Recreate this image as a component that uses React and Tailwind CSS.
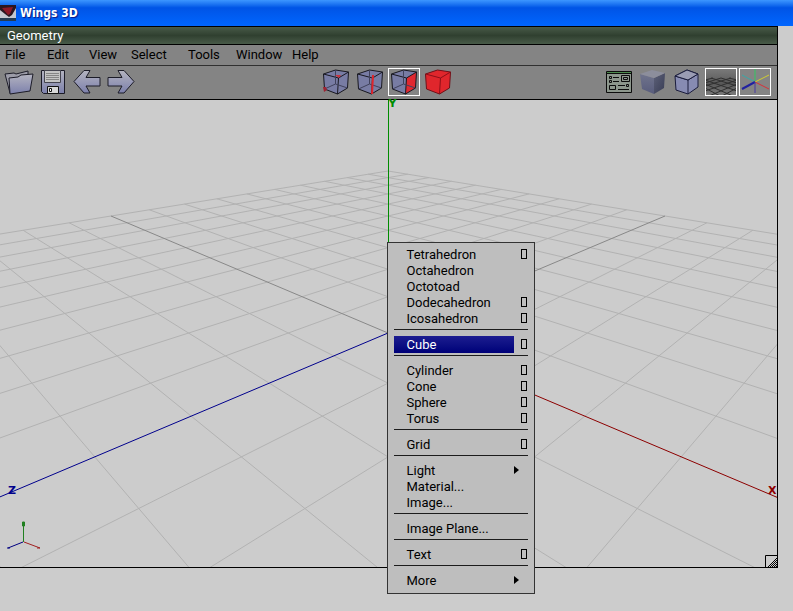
import { Fragment } from "react";

// --- DATA ---
const menuBar = [
  { label: "File", width: "w-[42px]" },
  { label: "Edit", width: "w-[42px]" },
  { label: "View", width: "w-[42px]" },
  { label: "Select", width: "w-[57px]" },
  { label: "Tools", width: "w-[48px]" },
  { label: "Window", width: "w-[56px]" },
  { label: "Help", width: "w-[40px]" },
];

const popupGroups = [
  [
    { label: "Tetrahedron", option: true },
    { label: "Octahedron" },
    { label: "Octotoad" },
    { label: "Dodecahedron", option: true },
    { label: "Icosahedron", option: true },
  ],
  [{ label: "Cube", option: true, active: true }],
  [
    { label: "Cylinder", option: true },
    { label: "Cone", option: true },
    { label: "Sphere", option: true },
    { label: "Torus", option: true },
  ],
  [{ label: "Grid", option: true }],
  [{ label: "Light", submenu: true }, { label: "Material..." }, { label: "Image..." }],
  [{ label: "Image Plane..." }],
  [{ label: "Text", option: true }],
  [{ label: "More", submenu: true }],
];

// --- GROUND PLANE ---
const GRID = 10;

// perspective projection of the point (x, z) on the ground
const project = (x, z) => {
  const d = 1 - 0.08 * (x + z);
  return [388 + (49.86 * (x - z)) / d, 263.25 / d - 30.25];
};

const segment = (x1, z1, x2, z2) => {
  const [ax, ay] = project(x1, z1);
  const [bx, by] = project(x2, z2);
  return `M${ax.toFixed(1)} ${ay.toFixed(1)}L${bx.toFixed(1)} ${by.toFixed(1)}`;
};

const gridPath = [];
for (let i = -GRID; i <= GRID; i++) {
  if (i === 0) continue;
  // stop in front of the camera
  const end = Math.min(GRID, 12 - i);
  gridPath.push(segment(i, -GRID, i, end), segment(-GRID, i, end, i));
}

// --- ICONS ---
const Gradients = () => (
  <svg className="absolute size-0" aria-hidden="true">
    <defs>
      <linearGradient id="steel" x1="0" y1="0" x2="0" y2="1">
        <stop offset="0" stopColor="#b4b4c0" />
        <stop offset="1" stopColor="#7c80ac" />
      </linearGradient>
      <linearGradient id="shadeLeft" x1="0" y1="0" x2="0" y2="1">
        <stop offset="0" stopColor="#70748c" />
        <stop offset="1" stopColor="#585c7c" />
      </linearGradient>
      <linearGradient id="shadeRight" x1="0" y1="0" x2="1" y2="1">
        <stop offset="0" stopColor="#5c6078" />
        <stop offset="1" stopColor="#383c54" />
      </linearGradient>
      <linearGradient id="haze" x1="0" y1="0" x2="0" y2="1">
        <stop offset="0" stopColor="#808080" />
        <stop offset="0.35" stopColor="#686868" />
        <stop offset="0.55" stopColor="#585858" />
        <stop offset="1" stopColor="#848484" />
      </linearGradient>
    </defs>
  </svg>
);

const Icon = ({ children }) => (
  <svg className="block size-8" viewBox="0 0 32 32" fill="none" aria-hidden="true">
    {children}
  </svg>
);

const IconOpen = () => (
  <Icon>
    <path d="M2 8l9-1 2 1 12-3v6L7 27z" fill="#9c9ca8" stroke="#1c1c28" strokeLinejoin="round" />
    <path
      d="M6 12l9-1 3-2 12-1-3 17-20 3z"
      fill="url(#steel)"
      stroke="#1c1c28"
      strokeLinejoin="round"
    />
  </Icon>
);
const IconSave = () => (
  <Icon>
    <path d="M4.500 4.500h23v23h-21l-2-2z" fill="url(#steel)" stroke="#1c1c28" />
    <path d="M7.500 4.500h16v12h-16z" fill="#c4c4c4" stroke="#44444f" />
    <path d="M9 7.500h13M9 9.500h13M9 11.500h13M9 13.500h13" stroke="#858585" />
    <path d="M10.500 20.500h11v7h-11z" fill="#d8d8d8" stroke="#111111" />
    <path d="M12.500 22.500h2v3h-2z" fill="#ffffff" stroke="#111111" />
  </Icon>
);
const IconUndo = () => (
  <Icon>
    <path
      d="M3 15.500L13 4.500h6l-4 7h14V20H15l4 7h-6z"
      fill="url(#steel)"
      stroke="#1c1c28"
      strokeLinejoin="round"
    />
  </Icon>
);
const IconRedo = () => (
  <Icon>
    <path
      d="M29 15.500L19 4.500h-6l4 7H3V20h14l-4 7h6z"
      fill="url(#steel)"
      stroke="#1c1c28"
      strokeLinejoin="round"
    />
  </Icon>
);

const CubeLines = () => (
  <>
    <path
      d="M3.500 8l12-4 13 2-1 16-10 6-13-5zM3.500 8l15 4 10-6M18.500 12l-1 16"
      stroke="#181820"
      strokeLinejoin="round"
    />
    <path d="M15.500 4v14l-11 5M15.500 18l12 4" stroke="#40425c" />
  </>
);
const CubeBody = () => <path d="M3.500 8l12-4 13 2-1 16-10 6-13-5z" fill="#787ca4" />;

const IconVertex = () => (
  <Icon>
    <CubeBody />
    <CubeLines />
    <path d="M15 9h6l-2 3z" fill="#c83440" />
    <path d="M3 21h3l1 3-3 2z" fill="#9c2434" />
  </Icon>
);
const IconEdge = () => (
  <Icon>
    <CubeBody />
    <CubeLines />
    <path d="M19 9l-1 19" stroke="#e0242c" strokeWidth="2" />
  </Icon>
);
const IconFace = () => (
  <Icon>
    <CubeBody />
    <path d="M18.500 12l10-6-1 16-10 6z" fill="#e02830" />
    <CubeLines />
  </Icon>
);
const IconBody = () => (
  <Icon>
    <path
      d="M3.500 8l12-4 13 2-1 16-10 6-13-5z"
      fill="#e0262c"
      stroke="#701018"
      strokeLinejoin="round"
    />
    <path d="M3.500 8l15 4 10-6M18.500 12l-1 16" stroke="#8c1018" />
  </Icon>
);

const IconPanel = () => (
  <Icon>
    <path d="M3.500 5.500h25v21h-25z" fill="#8c968c" stroke="#0c0c0c" />
    <path d="M4 6.500h24" stroke="#4c8a4c" />
    <path
      d="M4 7.500h24M6.500 10.500h2v2h-2zM6.500 14.500h2v2h-2zM10 11.500h6M10 15.500h6M18.500 9.500h8v6h-8zM20.500 11.500h4v2h-4zM6.500 19.500h6v4h-6zM15 19.500h7M23.500 18.500h2v2h-2zM15 23.500h11"
      stroke="#0c0c0c"
    />
  </Icon>
);
const IconSmooth = () => (
  <Icon>
    <path d="M3 8l14 4v16L5 23z" fill="url(#shadeLeft)" />
    <path d="M17 12l11-5-1 15-10 6z" fill="url(#shadeRight)" />
    <path d="M3 8l12-4 13 3-11 5z" fill="#8c8e9c" />
  </Icon>
);
const IconFlat = () => (
  <Icon>
    <path
      d="M4 10l12-6 11 4v13l-10 7-12-4zM4 10l13 4 10-6M17 14v14"
      fill="#878bb2"
      stroke="#1a1c3c"
      strokeLinejoin="round"
    />
    <path d="M4 10l12-6 11 4-10 6z" fill="#9a9cb4" stroke="#1a1c3c" strokeLinejoin="round" />
  </Icon>
);
const IconGround = () => (
  <Icon>
    <path d="M0 0h32v32H0z" fill="url(#haze)" />
    <path
      d="M0 14l8-2M0 17l16-5M0 20l26-8M0 25l32-11M4 30l28-12M15 31l17-9M32 14l-8-2M32 17l-16-5M32 20L6 12M32 25L0 14M28 30L0 18M17 31L0 22"
      stroke="#303030"
    />
  </Icon>
);
const IconAxes = () => (
  <Icon>
    <path d="M16 16V3" stroke="#30c860" />
    <path d="M16 16L3 9" stroke="#38a8a8" />
    <path d="M16 16l14-7" stroke="#d0cc30" />
    <path d="M16 16L3 23" stroke="#2020a0" strokeWidth="2" />
    <path d="M16 16l14 7" stroke="#d83038" />
    <path d="M16 16v11" stroke="#4838a0" />
  </Icon>
);

const ToolButton = ({ label, icon: IconComponent, pressed }) => (
  <button
    type="button"
    aria-label={label}
    aria-pressed={pressed}
    className={`flex h-7 w-8 items-center justify-center overflow-hidden border ${
      pressed ? "border-white" : "border-transparent"
    }`}
  >
    <span className="shrink-0">
      <IconComponent />
    </span>
  </button>
);

// --- PARTS ---
const TitleBar = () => (
  <header className="flex h-[26px] items-center gap-1 bg-linear-to-b from-[#3c96ff] via-[#0054e6] via-30% to-[#0066ff]">
    <svg className="h-4 w-4 shrink-0" viewBox="0 0 16 16" aria-hidden="true">
      <path d="M0 0h16v16H0z" fill="#c4c8d0" />
      <path d="M0 0h16v3l-4 7-3 2-4-3-5-4z" fill="#2a1620" />
      <path d="M2 3l11-1-3 7-2 1z" fill="#8c1828" />
      <path d="M0 13h16v3H0z" fill="#243c54" />
    </svg>
    <h1 className="font-['DejaVu_Sans_Condensed','DejaVu_Sans',sans-serif] text-[12px] font-bold text-white [text-shadow:1px_1px_1px_#0a1883]">
      Wings 3D
    </h1>
  </header>
);

const Scene = () => (
  <svg
    className="block h-full w-full"
    viewBox="0 0 777 467"
    preserveAspectRatio="xMidYMid slice"
    role="img"
    aria-label="Perspective view"
  >
    <path d={gridPath.join("")} fill="none" stroke="#b2b2b2" />
    <path d={segment(-GRID, 0, 0, 0) + segment(0, -GRID, 0, 0)} stroke="#888888" />
    <path d="M388.500 0V233" stroke="#008c00" />
    <path d={segment(0, 0, 9, 0)} stroke="#8c0000" />
    <path d={segment(0, 0, 0, 9)} stroke="#00008c" />
    <g className="font-['DejaVu_Sans',sans-serif] text-[11px] font-bold">
      <text x="768" y="394" fill="#8c0000">X</text>
      <text x="8" y="394" fill="#00008c">Z</text>
    </g>
    <path d="M23.500 442v-20M22.500 422v4h2v-4z" stroke="#208020" />
    <path d="M24 442l16 6M37 448h3" stroke="#a02020" />
    <path d="M23 442l-15 6M7 448h3" stroke="#000080" />
  </svg>
);

const PopupItem = ({ item }) => (
  <li className="flex h-4 items-center justify-between">
    <button
      type="button"
      className={`flex w-[120px] items-center pt-0.5 pl-[13px] text-left ${
        item.active ? "h-[17px] bg-linear-to-b from-[#1c1c90] to-[#000078] text-white" : "h-4"
      }`}
    >
      {item.label}
    </button>
    {item.option && (
      <button
        type="button"
        aria-label={`${item.label} options`}
        className="mr-px h-[10px] w-[6px] border border-black"
      />
    )}
    {item.submenu && (
      <svg className="mr-[9px] h-2 w-[5px]" viewBox="0 0 5 8" aria-hidden="true">
        <path d="M0 0l5 4-5 4z" />
      </svg>
    )}
  </li>
);

const Popup = () => (
  <ul className="absolute top-[142px] left-[calc(50%-2px)] w-[148px] border border-[#333333] bg-[#bebebe] px-[6px] pt-[3px] pb-[5px]">
    {popupGroups.map((group, index) => (
      <Fragment key={group[0].label}>
        {index > 0 && (
          <li className="h-[10px] pt-[3px]">
            <hr className="border-t border-[#1c1c1c]" />
          </li>
        )}
        {group.map((item) => (
          <PopupItem key={item.label} item={item} />
        ))}
      </Fragment>
    ))}
  </ul>
);

export default function App() {
  return (
    <div className="flex min-h-screen flex-col bg-[#cccccc] font-['Roboto',sans-serif] text-[13px] leading-4 text-black">
      <Gradients />
      <TitleBar />
      <main className="mr-[15px] mb-[43px] flex flex-1 flex-col border-r border-black">
        <h2 className="h-[19px] border-y border-black bg-linear-to-b from-[#485a48] via-[#304030] to-[#485a48] pt-px pl-[7px] text-white">
          Geometry
        </h2>
        <nav className="flex h-[21px] items-center border-b border-[#303030] bg-[#848484] pl-[5px]">
          {menuBar.map((item) => (
            <button key={item.label} type="button" className={`${item.width} text-left`}>
              {item.label}
            </button>
          ))}
        </nav>
        <div className="grid h-[34px] grid-cols-[1fr_auto_1fr] items-start border-b border-black bg-[#848484] pt-[2px] pr-[6px] pl-[3px]">
          <div className="flex gap-0.5">
            <ToolButton label="Open" icon={IconOpen} />
            <ToolButton label="Save" icon={IconSave} />
            <ToolButton label="Undo" icon={IconUndo} />
            <ToolButton label="Redo" icon={IconRedo} />
          </div>
          <div className="flex gap-0.5">
            <ToolButton label="Vertex" icon={IconVertex} pressed={false} />
            <ToolButton label="Edge" icon={IconEdge} pressed={false} />
            <ToolButton label="Face" icon={IconFace} pressed={true} />
            <ToolButton label="Body" icon={IconBody} pressed={false} />
          </div>
          <div className="flex justify-end gap-0.5">
            <ToolButton label="Geometry graph" icon={IconPanel} />
            <ToolButton label="Smooth preview" icon={IconSmooth} pressed={false} />
            <ToolButton label="Orthogonal view" icon={IconFlat} pressed={false} />
            <ToolButton label="Show ground plane" icon={IconGround} pressed={true} />
            <ToolButton label="Show axes" icon={IconAxes} pressed={true} />
          </div>
        </div>
        <section className="relative flex-1 border-b border-black">
          <div className="absolute inset-0 overflow-hidden">
            <Scene />
          </div>
          <span className="absolute -top-0.5 left-1/2 font-['DejaVu_Sans',sans-serif] text-[11px] leading-3 font-bold text-[#008c00]">
            Y
          </span>
          <svg className="absolute right-0 bottom-0 size-3" viewBox="0 0 12 12" aria-hidden="true">
            <path d="M0.500 12V0.500H12" fill="none" stroke="#000000" />
            <path d="M3 12l9-9M5 12l7-7M7 12l5-5M9 12l3-3M11 12l1-1" stroke="#000000" />
          </svg>
          <Popup />
        </section>
      </main>
    </div>
  );
}
